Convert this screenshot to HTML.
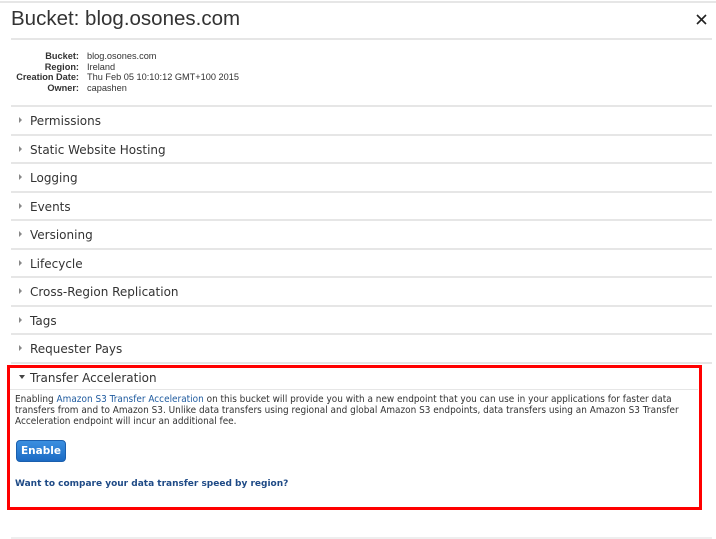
<!DOCTYPE html>
<html><head><style>
body{margin:0;width:716px;height:539px;background:#fff;position:relative;overflow:hidden;font-family:"DejaVu Sans",Verdana,sans-serif;color:#333}
.abs{position:absolute}
.hl{position:absolute;left:11px;right:4px;height:2px;background:#e6e6e6}
.row{position:absolute;left:19px;font-size:12px;color:#333;white-space:nowrap}
.row:before{content:"";display:inline-block;width:0;height:0;border-left:3px solid #888;border-top:3px solid transparent;border-bottom:3px solid transparent;margin-right:8px;vertical-align:2px}
.info{position:absolute;font-family:"Liberation Sans",Arial,sans-serif;font-size:9.2px;line-height:10.5px}
</style></head><body>
<div class="abs" style="left:0;right:0;top:1px;height:2px;background:#e6e6e6"></div>
<div class="abs" style="left:11px;top:7px;font-family:'Liberation Sans',Arial,sans-serif;font-size:20.5px;color:#333">Bucket: blog.osones.com</div>
<svg class="abs" style="left:696px;top:14px" width="11" height="11" viewBox="0 0 11 11"><path d="M1 1L10 10M10 1L1 10" stroke="#222" stroke-width="1.6"/></svg>
<div class="hl" style="top:38px"></div>
<div class="info" style="left:0;width:79px;text-align:right;top:51px;font-weight:bold">Bucket:<br>Region:<br>Creation Date:<br>Owner:</div>
<div class="info" style="left:87px;top:51px">blog.osones.com<br>Ireland<br>Thu Feb 05 10:10:12 GMT+100 2015<br>capashen</div>
<div class="hl" style="top:105px"></div>
<div class="row" style="top:114px">Permissions</div>
<div class="hl" style="top:134px"></div>
<div class="row" style="top:143px">Static Website Hosting</div>
<div class="hl" style="top:162px"></div>
<div class="row" style="top:171px">Logging</div>
<div class="hl" style="top:191px"></div>
<div class="row" style="top:200px">Events</div>
<div class="hl" style="top:219px"></div>
<div class="row" style="top:228px">Versioning</div>
<div class="hl" style="top:248px"></div>
<div class="row" style="top:257px">Lifecycle</div>
<div class="hl" style="top:276px"></div>
<div class="row" style="top:285px">Cross-Region Replication</div>
<div class="hl" style="top:305px"></div>
<div class="row" style="top:314px">Tags</div>
<div class="hl" style="top:333px"></div>
<div class="row" style="top:342px">Requester Pays</div>
<div class="hl" style="top:362px"></div>
<div class="abs" style="left:7px;top:365px;width:689px;height:139px;border:3px solid #f00"></div>
<div class="abs" style="left:19px;top:371px;font-size:12px;color:#333"><span style="display:inline-block;border-top:4px solid #444;border-left:3px solid transparent;border-right:3px solid transparent;vertical-align:3px;margin-right:5px"></span>Transfer Acceleration</div>
<div class="abs" style="left:10px;width:688px;top:389px;height:1px;background:#e6e6e6"></div>
<div class="abs" style="left:15px;top:394px;white-space:nowrap;font-size:9.6px;line-height:11px;color:#333;transform:scaleX(0.93);transform-origin:0 0">Enabling <span style="color:#1e5a9e">Amazon S3 Transfer Acceleration</span> on this bucket will provide you with a new endpoint that you can use in your applications for faster data<br>transfers from and to Amazon S3. Unlike data transfers using regional and global Amazon S3 endpoints, data transfers using an Amazon S3 Transfer<br>Acceleration endpoint will incur an additional fee.</div>
<div class="abs" style="left:16px;top:440px;width:50px;height:22px;border-radius:4px;background:linear-gradient(#3b8fe0,#1c6bc4);border:1px solid #1a5fae;box-sizing:border-box;color:#fff;font-weight:bold;font-size:10.5px;line-height:20px;text-align:center">Enable</div>
<div class="abs" style="left:15px;top:479px;font-size:9px;font-weight:bold;color:#1e4a86">Want to compare your data transfer speed by region?</div>
<div class="abs" style="left:11px;right:4px;top:537px;height:2px;background:#eee"></div>
</body></html>
